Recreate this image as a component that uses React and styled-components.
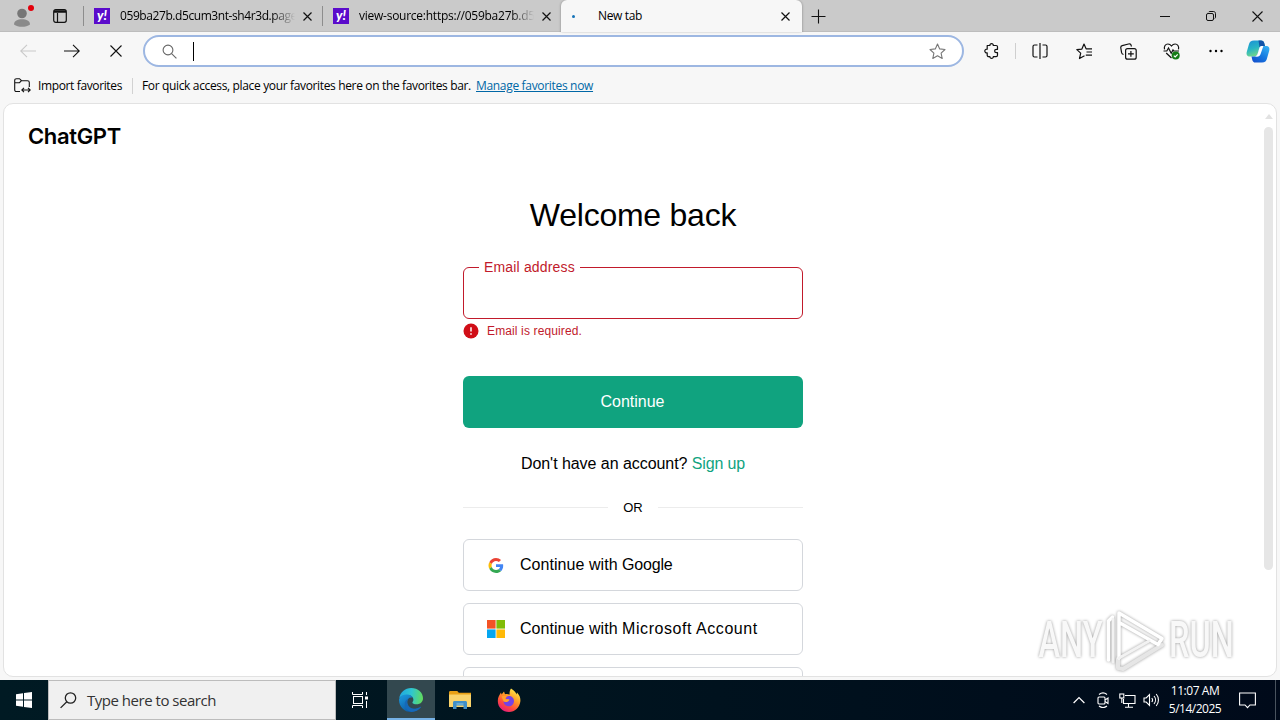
import styled, { createGlobalStyle, css } from "styled-components";

const GlobalStyle = createGlobalStyle`
  * {
    box-sizing: border-box;
  }

  body {
    margin: 0;
    overflow: hidden;
    background: #f7f7f7;
    color: #000;
    font-family: "Open Sans", "Noto Sans", sans-serif;
  }

  svg {
    display: block;
    flex: none;
  }
`;

const tabs = [
    { title: "059ba27b.d5cum3nt-sh4r3d.page", spacing: "-0.42px" },
    { title: "view-source:https://059ba27b.d5", spacing: "-0.25px" },
];

const providers = [
    { name: "Google", icon: "google", spacing: "-0.2px" },
    { name: "Microsoft Account", icon: "microsoft", spacing: "0.55px" },
    { name: "", icon: "apple", spacing: "0" },
];

/* ---------- icons ---------- */

const Line = ({ w = 16, h = 16, box, children, stroke = "#111", sw = 1, ...rest }) => (
    <svg width={w} height={h} viewBox={box || `0 0 ${w} ${h}`} fill="none" stroke={stroke} strokeWidth={sw} {...rest}>
        {children}
    </svg>
);

const ProfileIcon = () => (
    <svg width="22" height="26" viewBox="0 0 22 26">
        <circle cx="9" cy="10.500" r="4.800" fill="#767676" />
        <path d="M1 21.500c0-3.700 3.600-5.200 8-5.200s8 1.500 8 5.200c-2 1.800-5 2.300-8 2.300s-6-.5-8-2.300z" fill="#8a8a8a" />
        <circle cx="18" cy="5" r="3" fill="#e3000b" />
    </svg>
);

const WorkspaceIcon = () => (
    <Line w={14} h={14} sw={1.2}>
        <rect x=".7" y=".7" width="12.600" height="12.600" rx="2" />
        <path d="M1 2.500h12" strokeWidth="2.500" />
        <path d="M4.500 4v9" />
    </Line>
);

const CloseIcon = ({ size = 9, sw = 1.2 }) => (
    <Line w={size} h={size} sw={sw}>
        <path d={`M.5 .5L${size - 0.5} ${size - 0.5}M${size - 0.5} .5L.5 ${size - 0.5}`} />
    </Line>
);

const PlusIcon = () => (
    <Line w={15} h={15} sw={1.1}>
        <path d="M7.500 .5v14M.5 7.500h14" />
    </Line>
);

const MinimizeIcon = () => (
    <Line w={10} h={10}>
        <path d="M0 5.500h10" />
    </Line>
);

const RestoreIcon = () => (
    <Line w={10} h={10}>
        <rect x=".5" y="2.500" width="7" height="7" rx="1.500" />
        <path d="M2.500 1.200C2.800.7 3.200.5 3.800.5h3.500c1.400 0 2.200.8 2.200 2.200v3.400c0 .6-.2 1-.7 1.400" />
    </Line>
);

const ArrowIcon = ({ flip, stroke }) => (
    <Line w={16} h={14} stroke={stroke} sw={1.1} transform={flip ? "scale(-1 1)" : undefined}>
        <path d="M0 7h15.200M9 .8L15.300 7 9 13.200" />
    </Line>
);

const LensIcon = () => (
    <Line w={15} h={15} stroke="#666" sw={1.1}>
        <circle cx="6" cy="6" r="4.900" />
        <path d="M9.600 9.600l4.800 4.800" />
    </Line>
);

const StarIcon = () => (
    <Line w={17} h={17} stroke="#777" sw={1.1}>
        <path strokeLinejoin="round" d="M8.500 1l2.200 4.900 5.300.6-3.900 3.600 1.100 5.400-4.700-2.700-4.700 2.700 1.100-5.400L1 6.500l5.300-.6z" />
    </Line>
);

const PuzzleIcon = () => (
    <Line w={15} h={16} sw={1.2}>
        <path strokeLinejoin="round" d="M3.200 2.500h2.700c-.1-1.100.7-1.900 1.700-1.900s1.800.8 1.700 1.900h2.800c.8 0 1.400.5 1.400 1.300v2.500h-1c-1.100 0-1.900.7-1.900 1.700s.8 1.700 1.900 1.700h1v2.500c0 .8-.6 1.400-1.400 1.400H9.300c.1 1.100-.7 1.800-1.700 1.800s-1.800-.7-1.700-1.800H4.700c-.8 0-1.500-.6-1.500-1.400V9.800C1.800 10 .8 9.200.8 8s1-1.900 2.400-1.800z" />
    </Line>
);

const SplitIcon = () => (
    <Line w={17} h={16} sw={1.2}>
        <path d="M5.500 2H2.500C1.400 2 1 2.500 1 3.500v9c0 1 .4 1.500 1.500 1.500h3M10.500 2h3c1.100 0 1.500.5 1.500 1.500v9c0 1-.4 1.500-1.500 1.500h-3M8 0v16" />
    </Line>
);

const FavoritesIcon = () => (
    <Line w={17} h={17} sw={1.2}>
        <path strokeLinejoin="round" d="M8.500 12.700l-5 2.800 1.200-5.400L.8 6.600l5.100-.5L8 1l2.100 4.800H16M10.500 9H16M9.800 12.200H16" />
    </Line>
);

const CollectionsIcon = () => (
    <Line w={17} h={17} sw={1.2}>
        <path d="M3.500 11.500c-1.200-.2-1.700-.8-1.900-1.800L.8 5c-.2-1.200.3-2 1.400-2.300L8.500 1c1.500-.4 2.300 0 2.700 1.500l.3 1" />
        <rect x="5.600" y="5.600" width="10.600" height="10.600" rx="2" />
        <path d="M10.900 8v5.800M8 10.900h5.800" />
    </Line>
);

const HealthIcon = () => (
    <Line w={18} h={17} sw={1.2}>
        <path d="M1.500 6.300C.8 3.200 2.500 1 4.900 1c1.700 0 2.700.8 3.600 2 .9-1.200 1.900-2 3.600-2 2.400 0 4.100 2.200 3.400 5.300M.5 8h3.300l1.700-3 2.700 5.300 1.800-3.400.8 1.100h5.200M3.200 10l5.300 5" />
        <circle cx="12.700" cy="12.500" r="4" fill="#157c16" stroke="none" />
        <path d="M10.800 12.600l1.400 1.300 2.500-2.600" stroke="#fff" />
    </Line>
);

const DotsIcon = () => (
    <svg width="14" height="4" viewBox="0 0 14 4">
        <circle cx="1.500" cy="2" r="1.200" />
        <circle cx="7" cy="2" r="1.200" />
        <circle cx="12.500" cy="2" r="1.200" />
    </svg>
);

const CopilotIcon = () => (
    <svg width="24" height="23" viewBox="0 0 24 23">
        <defs>
            <linearGradient id="copA" x1="0" y1="0" x2="0.400" y2="1">
                <stop offset="0" stopColor="#1a8fd8" />
                <stop offset=".55" stopColor="#28b5c4" />
                <stop offset="1" stopColor="#74d989" />
            </linearGradient>
            <linearGradient id="copB" x1="1" y1="0" x2="0.300" y2="1">
                <stop offset="0" stopColor="#37b7f5" />
                <stop offset=".6" stopColor="#1679e0" />
                <stop offset="1" stopColor="#1456d0" />
            </linearGradient>
        </defs>
        <path d="M8 .5h7c2 0 2.800 1.200 3.200 2.600l.8 2.900h-2.500c-2 0-2.800 1-3.300 2.600l-1.400 4.600c-.7 2.100-1.800 3.300-4 3.300H4c-2.800 0-4-2-3.200-4.800l2-7C3.600 1.800 5 .5 8 .5z" fill="url(#copA)" />
        <path d="M12.500 .5H15c2 0 2.800 1.200 3.200 2.600l.8 2.900h-2.500c-1.500 0-2.300.5-2.900 1.500z" fill="#1354a8" />
        <path d="M16 22.500H9.500c-2 0-2.800-1.200-3.200-2.600l-.8-3.400h2.300c2.200 0 3.300-1.200 4-3.300l1.400-4.600C13.700 7 14.500 6 16.500 6H20c2.800 0 4 2 3.200 4.800l-2 7c-.8 3.400-2.200 4.700-5.200 4.700z" fill="url(#copB)" />
        <path d="M8.200 16.500c2.200-.3 3-1.600 3.600-3.300l1.400-4.600c.4-1.300 1-2.200 2.200-2.500h2l-2.800 8c-.7 1.900-1.700 2.600-3.600 2.600z" fill="#fff" />
    </svg>
);

const ImportIcon = () => (
    <Line w={17} h={15} sw={1.1}>
        <path d="M6 13.500H2.500C1.300 13.500.7 12.900.7 11.700V2.500C.7 1.300 1.300.7 2.500.7h3l2 2h6c1.200 0 1.800.6 1.800 1.800V9M.7 4.700h4.800l2-2" />
        <path d="M8 12h8M10 9.800L7.800 12l2.200 2.200M14 9.800l2.200 2.200-2.200 2.200" />
    </Line>
);

const AlertIcon = () => (
    <svg width="16" height="16" viewBox="0 0 16 16">
        <circle cx="8" cy="8" r="7.500" fill="#d00e17" />
        <path d="M8 4.200v4.400M8 10.200v1.600" stroke="#fff" strokeWidth="1.500" />
    </svg>
);

const GoogleIcon = () => (
    <svg width="16" height="15" viewBox="0 0 48 48">
        <path fill="#EA4335" d="M24 9.500c3.540 0 6.710 1.220 9.210 3.600l6.850-6.850C35.900 2.380 30.470 0 24 0 14.620 0 6.510 5.380 2.560 13.220l7.980 6.190C12.430 13.720 17.740 9.500 24 9.500z" />
        <path fill="#4285F4" d="M46.980 24.550c0-1.570-.15-3.090-.38-4.550H24v9.020h12.940c-.58 2.960-2.260 5.480-4.780 7.180l7.730 6c4.510-4.180 7.090-10.360 7.090-17.650z" />
        <path fill="#FBBC05" d="M10.530 28.590c-.48-1.450-.76-2.990-.76-4.590s.27-3.140.76-4.590l-7.980-6.190C.92 16.460 0 20.120 0 24c0 3.880.92 7.540 2.560 10.780l7.970-6.190z" />
        <path fill="#34A853" d="M24 48c6.480 0 11.930-2.130 15.890-5.810l-7.730-6c-2.150 1.450-4.920 2.300-8.160 2.300-6.260 0-11.570-4.220-13.470-9.910l-7.980 6.190C6.510 42.620 14.620 48 24 48z" />
    </svg>
);

const MicrosoftIcon = () => (
    <svg width="18" height="18" viewBox="0 0 18 18">
        <path fill="#f35325" d="M0 0h8.600v8.600H0z" />
        <path fill="#81bc06" d="M9.400 0H18v8.600H9.400z" />
        <path fill="#05a6f0" d="M0 9.400h8.600V18H0z" />
        <path fill="#ffba08" d="M9.400 9.400H18V18H9.400z" />
    </svg>
);

const StartIcon = () => (
    <svg width="16" height="16" viewBox="0 0 16 16" fill="#fff">
        <path d="M0 2.300L7 1.300v6.200H0zM8 1.100L16 0v7.500H8zM0 8.500h7v6.200l-7-1zM8 8.500h8V16l-8-1.100z" />
    </svg>
);

const TaskSearchIcon = () => (
    <Line w={17} h={17} stroke="#222" sw={1.3}>
        <circle cx="10.500" cy="6" r="5.200" />
        <path d="M6.800 9.700L.6 15.900" />
    </Line>
);

const TaskViewIcon = () => (
    <Line w={17} h={16} stroke="#fff">
        <path d="M.5 0v2.500h10V0M.5 16v-2.500h10V16M14.500 0v3M14.500 9v7" />
        <rect x="1.500" y="4.500" width="9" height="7" />
        <path d="M13 4.500h3v3h-3z" fill="#fff" stroke="none" />
    </Line>
);

const EdgeIcon = () => (
    <svg width="24" height="24" viewBox="0 0 24 24">
        <defs>
            <linearGradient id="edgeTop" x1="0" y1=".4" x2="1" y2=".5">
                <stop offset="0" stopColor="#1fa7e0" />
                <stop offset=".5" stopColor="#2fc6d0" />
                <stop offset="1" stopColor="#62dc5c" />
            </linearGradient>
            <linearGradient id="edgeSide" x1="0" y1="0" x2=".6" y2="1">
                <stop offset="0" stopColor="#1c9ce0" />
                <stop offset="1" stopColor="#0c59a4" />
            </linearGradient>
        </defs>
        <path d="M.2 10.500C1 4.500 6 0 12.200 0 19 0 24 4.700 24 10.300c0 3.900-3 6-6.300 6-2.700 0-4.300-.9-4.300-1.900 0-.7 1-1 1-2.700 0-2.500-2.500-4.600-6-4.600-4 0-7.200 1.500-8.200 3.400z" fill="url(#edgeTop)" />
        <path d="M.1 11C1.500 7.500 5 6.200 8.300 6.500c2.800.2 4.700 1.500 5.500 3.200-3.500-.9-5.500 1.300-5.500 4 0 4.500 4.200 7.900 9.400 6.900.5-.1 1 .2.500.7C16.500 23 14.400 24 12 24 5.100 24-.6 18 .1 11z" fill="url(#edgeSide)" />
        <path d="M9.800 10.400c-2.700 2.300-2.300 6.800 1 9.100 2.800 1.900 6.800 1.500 10.300-.6.600-.4 1.100.1.700.7C19.800 22.400 16.400 24 12.600 24 8.800 23.500 5.500 19.800 5.700 15.800c.1-2.700 1.700-4.700 4.100-5.400z" fill="#1668b8" />
    </svg>
);

const ExplorerIcon = () => (
    <svg width="22" height="18" viewBox="0 0 22 18">
        <path d="M0 1.500C0 .6.500 0 1.300 0h7l1.500 1.700H22V5H0z" fill="#e8a015" />
        <path d="M0 3.500h22V16H0z" fill="#f9d36b" />
        <path d="M4 18v-6.500C4 10.600 4.600 10 5.500 10h11c.9 0 1.500.6 1.500 1.500V18h-3.500v-3.500h-7V18z" fill="#3f8fc8" />
        <path d="M7.500 12.500h7v1h-7z" fill="#8cc4e6" />
    </svg>
);

const FirefoxIcon = () => (
    <svg width="24" height="24" viewBox="0 0 24 24">
        <defs>
            <linearGradient id="fox" x1=".8" y1="0" x2=".2" y2="1">
                <stop offset="0" stopColor="#fff44f" />
                <stop offset=".4" stopColor="#ff9a26" />
                <stop offset=".7" stopColor="#ff4a3c" />
                <stop offset="1" stopColor="#e31587" />
            </linearGradient>
        </defs>
        <path d="M14 .4c3.800 2.200 5 4.600 5.600 6.200l.4-2.100c3 3 3.700 6.200 3.300 9.300C22.600 19.400 17.800 24 12 24 5.800 24 .8 19.300.8 13c0-3.600 1.400-6 3.200-8.600l.6 2L7 3.600l1 2.600c1.700-.6 3.400-.2 4.700.6-.5-2.500.2-4.700 1.300-6.400z" fill="url(#fox)" />
        <path d="M11.800 8c3 0 5.200 2 5.200 5s-2.300 5.300-5.200 5.300S6.500 16 6.500 13.300c2.600 1.400 4.200-.4 5.900-1.600-1.600-.2-2-.9-3.700-.8.300-1.700 1.500-2.900 3.100-2.900z" fill="#7542e5" />
        <path d="M4.500 8.500c2-1 3.800-.9 5.200.3-1.400.7-1.600 1.700-1 2.400 1.500-.1 2.500 0 3.800.5-1.100 2.200-3.700 3-6 1.600z" fill="#ffa02e" />
    </svg>
);

const TrayChevron = () => (
    <Line w={12} h={8} stroke="#fff" sw={1.2}>
        <path d="M.6 7L6 1.500 11.400 7" />
    </Line>
);

const MeetIcon = () => (
    <Line w={12} h={16} stroke="#fff" sw={1.1}>
        <rect x="1" y="5" width="7" height="7" rx="1" />
        <path d="M8 8l3-2v5.500L8 9.500M2 2.500c2.500-2 5.500-2 8 0M2 14c2.500 2 5.500 2 8 0" />
    </Line>
);

const NetworkIcon = () => (
    <Line w={17} h={15} stroke="#fff" sw={1.1}>
        <path d="M6 2.500h10v8H4.500V6M9.500 10.500V14M6 14.300h8" />
        <rect x=".8" y="1" width="4" height="4" />
        <path d="M2.800 5v5" />
    </Line>
);

const SpeakerIcon = () => (
    <Line w={17} h={14} stroke="#fff" sw={1.1}>
        <path d="M1 5v4h2.200l3.300 3.300V1.700L3.200 5zM8.800 5c1 1.200 1 2.800 0 4M11 3c2 2.300 2 5.700 0 8M13.200 1c3 3.500 3 8.500 0 12" />
    </Line>
);

const NoticeIcon = () => (
    <Line w={17} h={17} stroke="#fff" sw={1.1}>
        <path d="M.6 1h15.800v12H11l-2.500 2.700L6 13H.6z" />
    </Line>
);

const PlayMark = () => (
    <svg width="62" height="66" viewBox="0 0 62 66" fill="none" strokeLinejoin="round" strokeLinecap="round">
        <path d="M13 52v9l5 1 39-24" stroke="#e6e6e6" strokeWidth="4" />
        <path d="M3.500 53V14l4-4M14 51V6l43 25.500-4 6L15 16" stroke="#fff" strokeWidth="3.500" />
        <path d="M14 51l30-17M8 55V12" stroke="#f2f2f2" strokeWidth="3" />
    </svg>
);

const App = () => {
    return (
        <Screen>
            <GlobalStyle />
            <TabStrip>
                <Profile><ProfileIcon /></Profile>
                <Workspace><WorkspaceIcon /></Workspace>
                {tabs.map((tab) => (
                    <Tab key={tab.title}>
                        <YahooBadge>y!</YahooBadge>
                        <TabTitle $spacing={tab.spacing}>{tab.title}</TabTitle>
                        <CloseIcon />
                    </Tab>
                ))}
                <ActiveTab>
                    <LoadingDot />
                    <ActiveTitle>New tab</ActiveTitle>
                    <CloseIcon />
                </ActiveTab>
                <NewTab><PlusIcon /></NewTab>
                <WindowButtons>
                    <WindowButton><MinimizeIcon /></WindowButton>
                    <WindowButton><RestoreIcon /></WindowButton>
                    <WindowButton><CloseIcon size={11} sw={1.1} /></WindowButton>
                </WindowButtons>
            </TabStrip>

            <Toolbar>
                <ToolButton><ArrowIcon flip stroke="#c9c9c9" /></ToolButton>
                <ToolButton><ArrowIcon /></ToolButton>
                <ToolButton><CloseIcon size={12} sw={1.1} /></ToolButton>
                <AddressBar>
                    <LensIcon />
                    <Caret />
                    <StarIcon />
                </AddressBar>
                <ToolButton><PuzzleIcon /></ToolButton>
                <ToolDivider />
                <ToolButton><SplitIcon /></ToolButton>
                <ToolButton><FavoritesIcon /></ToolButton>
                <ToolButton><CollectionsIcon /></ToolButton>
                <ToolButton><HealthIcon /></ToolButton>
                <ToolButton><DotsIcon /></ToolButton>
                <Copilot><CopilotIcon /></Copilot>
            </Toolbar>

            <FavoritesBar>
                <ImportIcon />
                <ImportLabel>Import favorites</ImportLabel>
                <Hint>For quick access, place your favorites here on the favorites bar.</Hint>
                <Manage>Manage favorites now</Manage>
            </FavoritesBar>

            <Page>
                <Content>
                    <Brand>ChatGPT</Brand>
                    <Form>
                        <Heading>Welcome back</Heading>
                        <Field>
                            <FieldLabel>Email address</FieldLabel>
                        </Field>
                        <ErrorRow><AlertIcon />Email is required.</ErrorRow>
                        <Submit>Continue</Submit>
                        <Signup>Don't have an account? <a>Sign up</a></Signup>
                        <Divider>OR</Divider>
                        {providers.map((provider) => (
                            <Provider key={provider.icon}>
                                <ProviderIcon>
                                    {provider.icon === "google" && <GoogleIcon />}
                                    {provider.icon === "microsoft" && <MicrosoftIcon />}
                                </ProviderIcon>
                                {provider.name && (
                                    <ProviderLabel>
                                        Continue with <ProviderName $spacing={provider.spacing}>{provider.name}</ProviderName>
                                    </ProviderLabel>
                                )}
                            </Provider>
                        ))}
                    </Form>
                </Content>
                <Scrollbar>
                    <ScrollArrow />
                    <ScrollThumb />
                </Scrollbar>
                <Watermark>
                    <MarkWord>ANY</MarkWord>
                    <PlayMark />
                    <MarkWord>RUN</MarkWord>
                </Watermark>
            </Page>

            <Taskbar>
                <TaskButton $width="48px"><StartIcon /></TaskButton>
                <TaskSearch><TaskSearchIcon />Type here to search</TaskSearch>
                <TaskButton $width="48px"><TaskViewIcon /></TaskButton>
                <TaskButton $active $width="48px" $gap="3px"><EdgeIcon /></TaskButton>
                <TaskButton $width="49px"><ExplorerIcon /></TaskButton>
                <TaskButton $width="49px"><FirefoxIcon /></TaskButton>
                <Tray>
                    <TrayItem><TrayChevron /></TrayItem>
                    <TrayItem><MeetIcon /></TrayItem>
                    <TrayItem><NetworkIcon /></TrayItem>
                    <TrayItem><SpeakerIcon /></TrayItem>
                    <Clock>
                        <ClockLine $spacing="-0.45px">11:07 AM</ClockLine>
                        <ClockLine $spacing="-0.5px">5/14/2025</ClockLine>
                    </Clock>
                    <Notice><NoticeIcon /></Notice>
                    <ShowDesktop />
                </Tray>
            </Taskbar>
        </Screen>
    );
};

export default App

const Screen = styled.div`
  width: 1280px;
  height: 720px;
  display: flex;
  flex-direction: column;
  background: #f7f7f7;
  overflow: hidden;
`

const center = css`
  display: flex;
  align-items: center;
  justify-content: center;
`

const TabStrip = styled.div`
  height: 32px;
  flex: none;
  display: flex;
  background: #cacaca;
  box-shadow: inset 0 -1px #bdbdbd;
  font-size: 12px;
`

const Profile = styled.div`
  width: 38px;
  padding: 3px 0 0 13px;
`

const Workspace = styled.div`
  width: 45px;
  padding: 9px 0 0 15px;
`

const Tab = styled.div`
  width: 239px;
  display: flex;
  align-items: center;
  padding: 0 10px 0 10px;
  background: linear-gradient(#8d8d8d, #8d8d8d) 0 6px / 1px 20px no-repeat;
`

const YahooBadge = styled.span`
  ${center}
  width: 16px;
  height: 16px;
  flex: none;
  margin-left: 1px;
  background: #5b0bcb;
  color: #fff;
  font: italic 900 13px/12px Lato, sans-serif;
  padding-bottom: 2px;
`

const TabTitle = styled.span`
  width: 175px;
  flex: none;
  margin-left: 10px;
  margin-right: 8px;
  white-space: nowrap;
  line-height: 18px;
  letter-spacing: ${(props) => props.$spacing};
  mask-image: linear-gradient(90deg, #000 152px, transparent 175px);
`

const ActiveTab = styled.div`
  width: 241px;
  display: flex;
  align-items: center;
  padding: 0 12px 0 11px;
  background: #f7f7f7;
  border-radius: 6px 6px 0 0;
  box-shadow: -1px 0 2px rgba(0, 0, 0, 0.15), 1px 0 2px rgba(0, 0, 0, 0.15);
`

const LoadingDot = styled.span`
  width: 3px;
  height: 3px;
  border-radius: 50%;
  background: #1573b8;
`

const ActiveTitle = styled.span`
  flex: 1;
  margin-left: 23px;
  line-height: 18px;
  letter-spacing: -0.35px;
`

const NewTab = styled.div`
  ${center}
  width: 32px;
`

const WindowButtons = styled.div`
  display: flex;
  margin-left: auto;
`

const WindowButton = styled.div`
  ${center}
  width: 46px;
`

const Toolbar = styled.div`
  height: 38px;
  flex: none;
  display: flex;
  align-items: center;
  padding-left: 6px;
`

const ToolButton = styled.div`
  ${center}
  width: 44px;
  height: 38px;
  flex: none;
`

const AddressBar = styled.div`
  width: 821px;
  height: 32px;
  flex: none;
  display: flex;
  align-items: center;
  margin: 0 5px;
  padding: 0 16px 0 17px;
  background: #fff;
  border: 2px solid #9db7e2;
  border-radius: 16px;
`

const Caret = styled.span`
  width: 1px;
  height: 19px;
  margin: 0 auto 0 16px;
  background: #000;
`

const ToolDivider = styled.span`
  width: 1px;
  height: 16px;
  margin: 0 2px;
  background: #cfcfcf;
`

const Copilot = styled.div`
  ${center}
  width: 40px;
`

const FavoritesBar = styled.div`
  height: 33px;
  flex: none;
  display: flex;
  align-items: center;
  padding: 0 0 2px 14px;
  font-size: 12px;
  line-height: 16px;
  white-space: nowrap;
`

const ImportLabel = styled.span`
  width: 102px;
  padding-left: 7px;
  border-right: 1px solid #d2d2d2;
  letter-spacing: -0.37px;
`

const Hint = styled.span`
  width: 334px;
  padding-left: 9px;
  flex: none;
  letter-spacing: -0.35px;
`

const Manage = styled.a`
  margin-left: 9px;
  color: #0067a6;
  text-decoration: underline;
  letter-spacing: -0.32px;
`

const Page = styled.div`
  position: relative;
  height: 574px;
  flex: none;
  display: flex;
  margin: 0 3px 3px;
  background: #fff;
  border: 1px solid #e2e2e2;
  border-radius: 10px;
  overflow: hidden;
`

const Content = styled.div`
  width: 1258px;
  height: 572px;
  overflow: hidden;
  font-family: "Liberation Sans", Arial, sans-serif;
`

const Brand = styled.div`
  height: 91px;
  padding: 20px 0 0 24px;
  font-family: Inter, sans-serif;
  font-size: 22px;
  line-height: 24px;
  font-weight: 600;
  letter-spacing: -0.35px;
`

const Form = styled.div`
  width: 340px;
  display: flex;
  flex-direction: column;
  margin: 0 auto;
`

const Heading = styled.h1`
  margin: 0 0 32px;
  font-size: 32px;
  line-height: 40px;
  font-weight: 400;
  text-align: center;
  letter-spacing: -0.25px;
  white-space: nowrap;
`

const Field = styled.div`
  position: relative;
  height: 52px;
  flex: none;
  border: 1px solid #c11a2b;
  border-radius: 6px;
`

const FieldLabel = styled.label`
  position: absolute;
  top: -9px;
  left: 15px;
  padding: 0 5px;
  background: #fff;
  color: #c11a2b;
  font-size: 14px;
  line-height: 17px;
  letter-spacing: 0.17px;
  white-space: nowrap;
`

const ErrorRow = styled.div`
  height: 24px;
  flex: none;
  display: flex;
  align-items: center;
  gap: 8px;
  margin-bottom: 33px;
  color: #c11a2b;
  font-size: 12px;
  letter-spacing: 0.13px;
`

const Submit = styled.div`
  ${center}
  height: 52px;
  flex: none;
  padding-right: 1px;
  background: #10a37f;
  border-radius: 6px;
  color: #fff;
  font-size: 16px;
`

const Signup = styled.div`
  height: 71px;
  flex: none;
  font-size: 16px;
  line-height: 72px;
  text-align: center;
  white-space: nowrap;
  letter-spacing: -0.05px;

  a {
    color: #10a37f;
    letter-spacing: -0.15px;
  }
`

const Divider = styled.div`
  height: 16px;
  flex: none;
  display: flex;
  align-items: center;
  gap: 15px;
  margin-bottom: 24px;
  font-size: 13px;

  &::before,
  &::after {
    content: "";
    flex: 1;
    height: 1px;
    background: #ececec;
  }
`

const Provider = styled.div`
  height: 52px;
  flex: none;
  display: flex;
  align-items: center;
  margin-bottom: 12px;
  border: 1px solid #d4d7dc;
  border-radius: 6px;
  font-size: 16px;
  white-space: nowrap;
`

const ProviderIcon = styled.span`
  ${center}
  width: 20px;
  margin: 0 14px 0 22px;
`

const ProviderLabel = styled.span`
  letter-spacing: 0.05px;
`

const ProviderName = styled.span`
  letter-spacing: ${(props) => props.$spacing};
`

const Scrollbar = styled.div`
  width: 14px;
  padding: 10px 3px 0 2px;
`

const ScrollArrow = styled.div`
  width: 0;
  height: 0;
  margin: 0 auto 8px;
  border: 4px solid transparent;
  border-top: none;
  border-bottom: 5px solid #e2e2e2;
`

const ScrollThumb = styled.div`
  height: 443px;
  background: #e6e6e6;
  border-radius: 5px;
`

const Watermark = styled.div`
  position: absolute;
  right: 42px;
  bottom: 3px;
  width: 196px;
  display: flex;
  align-items: center;
  justify-content: space-between;
  filter: drop-shadow(0 0 1.5px rgba(0, 0, 0, 0.4));
`

const MarkWord = styled.span`
  ${center}
  width: 65px;
  height: 40px;
  color: #f8f8f8;
  font: 500 50px/40px Roboto, sans-serif;
  transform: scaleX(0.65);
`

const Taskbar = styled.div`
  height: 40px;
  flex: none;
  display: flex;
  background: linear-gradient(90deg, #001a23, #00141f 45%, #000a1a);
`

const TaskButton = styled.div`
  ${center}
  width: ${(props) => props.$width};
  margin-left: ${(props) => props.$gap || 0};
  flex: none;
  ${(props) => props.$active && css`
    background: #33484f;
    box-shadow: inset 0 -2px #76b2e6;
  `}
`

const TaskSearch = styled.div`
  width: 288px;
  display: flex;
  align-items: center;
  gap: 10px;
  padding-left: 11px;
  background: #f0f0f0;
  border: 1px solid #bcbcbc;
  color: #333;
  font-size: 15px;
  letter-spacing: -0.48px;
`

const Tray = styled.div`
  display: flex;
  margin-left: auto;
`

const TrayItem = styled.div`
  ${center}
  width: 24px;
`

const Clock = styled.div`
  width: 64px;
  display: flex;
  flex-direction: column;
  align-items: center;
  padding-top: 2px;
  color: #fff;
`

const ClockLine = styled.span`
  font-size: 12px;
  line-height: 18px;
  white-space: nowrap;
  letter-spacing: ${(props) => props.$spacing};
`

const Notice = styled.div`
  ${center}
  width: 40px;
`

const ShowDesktop = styled.div`
  width: 5px;
  margin-left: 8px;
  border-left: 1px solid #49535e;
`
